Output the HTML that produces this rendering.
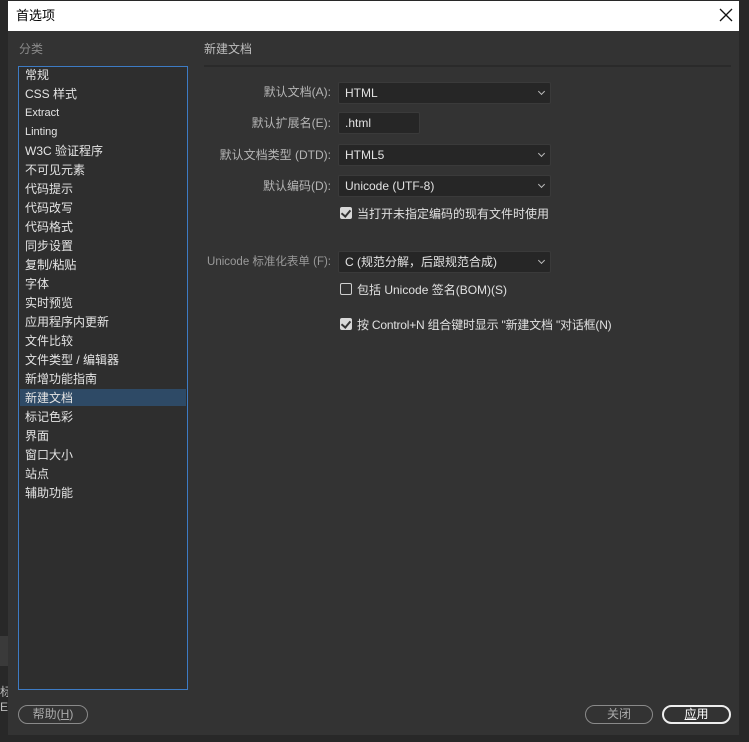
<!DOCTYPE html>
<html><head><meta charset="utf-8"><style>
*{margin:0;padding:0;box-sizing:border-box}
body{width:749px;height:742px;background:#282828;position:relative;overflow:hidden;font-family:"Liberation Sans","Noto Sans CJK SC",sans-serif;font-size:12px;color:#d6d6d6}
.a{position:absolute}
#title{left:8px;top:1px;width:731px;height:30px;background:#fff;color:#000;font-size:13px;line-height:30px;padding-left:8px}
#body{left:8px;top:31px;width:731px;height:704px;background:#333}
#list{left:18px;top:66px;width:170px;height:624px;border:1px solid #3d7bc4;background:#2e2e2e}
.it{position:absolute;left:6px;font-size:12px;line-height:19px;color:#e4e4e4;white-space:nowrap}
.sel{position:absolute;left:1px;width:166px;height:17px;top:322px;background:#2e4a66}
.lab{position:absolute;right:418px;text-align:right;color:#b5b5b5;white-space:nowrap;font-size:12px}
.dd{position:absolute;left:338px;width:213px;height:22px;background:#262626;border:1px solid #3a3a3a;border-radius:2px;color:#e2e2e2;line-height:20px;padding-left:6px;font-size:12px}
.dd.arr:after{content:"";position:absolute;right:6px;top:6px;width:4px;height:4px;border-right:1px solid #bbb;border-bottom:1px solid #bbb;transform:rotate(45deg)}
.cb{position:absolute;left:340px;width:12px;height:12px;border-radius:2px;background:#d8d8d8}
.cb.off{background:none;border:1px solid #cfcfcf}
.cb.on:after{content:"";position:absolute;left:3px;top:1px;width:4px;height:7px;border-right:2px solid #333;border-bottom:2px solid #333;transform:rotate(40deg)}
.ct{position:absolute;left:357px;color:#e0e0e0;white-space:nowrap}
.btn{position:absolute;top:705px;height:19px;border:1px solid #8a8a8a;border-radius:10px;text-align:center;line-height:17px;color:#aaa;font-size:12px}
</style></head><body>
<div class="a" style="left:0;top:636px;width:8px;height:30px;background:#3a3a3a"></div>
<div class="a" style="left:0;top:683px;width:8px;color:#bbb;font-size:12px">标<br>E</div>
<div class="a" id="title">首选项</div>
<svg class="a" style="left:719px;top:8px" width="14" height="14" viewBox="0 0 14 14"><path d="M1 1L13 13M13 1L1 13" stroke="#111" stroke-width="1.3"/></svg>
<div class="a" id="body"></div>
<div class="a" style="left:19px;top:40px;color:#8a8a8a;font-size:12px">分类</div>
<div class="a" style="left:204px;top:40px;color:#bdbdbd;font-size:12px">新建文档</div>
<div class="a" style="left:204px;top:65px;width:527px;height:2px;background:#2a2a2a"></div>
<div class="a" id="list">
<div class="sel"></div>
<div class="it" style="top:-1px">常规</div>
<div class="it" style="top:18px">CSS 样式</div>
<div class="it" style="top:37px;font-size:11px">Extract</div>
<div class="it" style="top:56px;font-size:11px">Linting</div>
<div class="it" style="top:75px">W3C 验证程序</div>
<div class="it" style="top:94px">不可见元素</div>
<div class="it" style="top:113px">代码提示</div>
<div class="it" style="top:132px">代码改写</div>
<div class="it" style="top:151px">代码格式</div>
<div class="it" style="top:170px">同步设置</div>
<div class="it" style="top:189px">复制/粘贴</div>
<div class="it" style="top:208px">字体</div>
<div class="it" style="top:227px">实时预览</div>
<div class="it" style="top:246px">应用程序内更新</div>
<div class="it" style="top:265px">文件比较</div>
<div class="it" style="top:284px">文件类型 / 编辑器</div>
<div class="it" style="top:303px">新增功能指南</div>
<div class="it" style="top:322px">新建文档</div>
<div class="it" style="top:341px">标记色彩</div>
<div class="it" style="top:360px">界面</div>
<div class="it" style="top:379px">窗口大小</div>
<div class="it" style="top:398px">站点</div>
<div class="it" style="top:417px">辅助功能</div>
</div>
<div class="lab" style="top:83px">默认文档(A):</div>
<div class="dd arr" style="top:82px">HTML</div>
<div class="lab" style="top:114px">默认扩展名(E):</div>
<div class="dd" style="top:112px;width:82px">.html</div>
<div class="lab" style="top:146px">默认文档类型 (DTD):</div>
<div class="dd arr" style="top:144px">HTML5</div>
<div class="lab" style="top:177px">默认编码(D):</div>
<div class="dd arr" style="top:175px">Unicode (UTF-8)</div>
<div class="cb on" style="top:207px"></div><div class="ct" style="top:205px">当打开未指定编码的现有文件时使用</div>
<div class="lab" style="top:253px;color:#9a9a9a;font-size:11.5px">Unicode 标准化表单 (F):</div>
<div class="dd arr" style="top:251px">C (规范分解，后跟规范合成)</div>
<div class="cb off" style="top:283px"></div><div class="ct" style="top:281px">包括 Unicode 签名(BOM)(S)</div>
<div class="cb on" style="top:318px"></div><div class="ct" style="top:316px;letter-spacing:-0.2px">按 Control+N 组合键时显示 "新建文档 "对话框(N)</div>
<div class="btn" style="left:18px;width:70px">帮助(<u>H</u>)</div>
<div class="btn" style="left:585px;width:68px">关闭</div>
<div class="btn" style="left:662px;width:69px;border:2px solid #eee;color:#fff;line-height:15px"><u>应</u>用</div>
</body></html>
